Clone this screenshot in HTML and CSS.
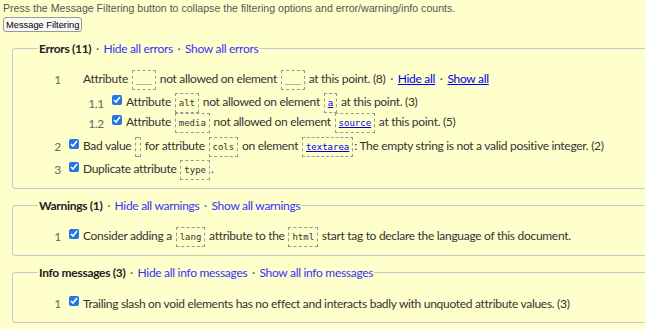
FILE: index.html
```html
<!doctype html>
<html lang="en">
  <head>
    <meta charset="UTF-8" />
    <title>Message Filtering</title>
    <link rel="stylesheet" href="styles.css">
  </head>
  <body>
    <p class="ayuda">Press the Message Filtering button to collapse the filtering options and error/warning/info counts.</p>
    <button class="filtro-btn">Message Filtering</button>

    <fieldset class="grupo">
      <legend>Errors (11) <span class="sep">·</span> <a href="#">Hide all errors</a> <span class="sep">·</span> <a href="#">Show all errors</a></legend>
      <div class="fila">
        <span class="num">1</span>
        <span class="casilla"></span>
        <span class="texto">Attribute <code>___</code> not allowed on element <code>___</code> at this point. (8) <span class="sep">·</span> <a class="sub" href="#">Hide all</a> <span class="sep">·</span> <a class="sub" href="#">Show all</a></span>
      </div>
      <div class="anidado">
        <div class="fila">
          <span class="num">1.1</span>
          <input type="checkbox" checked>
          <span class="texto">Attribute <code>alt</code> not allowed on element <code><a href="#">a</a></code> at this point. (3)</span>
        </div>
        <div class="fila">
          <span class="num">1.2</span>
          <input type="checkbox" checked>
          <span class="texto">Attribute <code>media</code> not allowed on element <code><a href="#">source</a></code> at this point. (5)</span>
        </div>
      </div>
      <div class="fila">
        <span class="num">2</span>
        <input type="checkbox" checked>
        <span class="texto">Bad value <code class="vacio"></code> for attribute <code>cols</code> on element <code><a href="#">textarea</a></code>: The empty string is not a valid positive integer. (2)</span>
      </div>
      <div class="fila">
        <span class="num">3</span>
        <input type="checkbox" checked>
        <span class="texto">Duplicate attribute <code>type</code>.</span>
      </div>
    </fieldset>

    <fieldset class="grupo">
      <legend>Warnings (1) <span class="sep">·</span> <a href="#">Hide all warnings</a> <span class="sep">·</span> <a href="#">Show all warnings</a></legend>
      <div class="fila">
        <span class="num">1</span>
        <input type="checkbox" checked>
        <span class="texto">Consider adding a <code>lang</code> attribute to the <code>html</code> start tag to declare the language of this document.</span>
      </div>
    </fieldset>

    <fieldset class="grupo">
      <legend>Info messages (3) <span class="sep">·</span> <a href="#">Hide all info messages</a> <span class="sep">·</span> <a href="#">Show all info messages</a></legend>
      <div class="fila">
        <span class="num">1</span>
        <input type="checkbox" checked>
        <span class="texto">Trailing slash on void elements has no effect and interacts badly with unquoted attribute values. (3)</span>
      </div>
    </fieldset>
  </body>
</html>
```

FILE: styles.css
```css
body {
  margin: 0;
  padding: 2px 3px;
  background-color: #ffffcc;
  font-family: "Lato", sans-serif;
  font-size: 12px;
  letter-spacing: -0.3px;
  color: #333;
  overflow: hidden;
  width: 760px;
}

.ayuda {
  margin: 0;
  font-family: "Liberation Sans", Arial, sans-serif;
  font-size: 10.6px;
  letter-spacing: 0;
  color: #555;
}

.filtro-btn {
  margin-top: 3px;
  font-family: "Liberation Sans", Arial, sans-serif;
  font-size: 9.3px;
  letter-spacing: 0;
  color: #000;
  background-color: #f8f8f8;
  border: 1px solid #999;
  border-radius: 3px;
  padding: 0 2px;
  height: 15px;
  line-height: 12px;
}

.grupo {
  margin: 9px 0 0 9px;
  padding: 12px 0 7px 0;
  border: 1px solid #c8c8c8;
  border-radius: 3px;
}

.grupo + .grupo {
  margin-top: 9px;
}

.grupo legend {
  margin-left: 25px;
  padding: 0 1px;
  font-weight: bold;
  color: #222;
}

legend a {
  font-weight: normal;
  color: #3333ff;
  text-decoration: none;
}

.sep {
  font-weight: normal;
  color: #555;
  padding: 0 2px;
}

.fila {
  display: flex;
  align-items: center;
  height: 23px;
}

.num {
  width: 48px;
  text-align: right;
  color: #666;
}

.casilla,
.fila input[type="checkbox"] {
  width: 10px;
  height: 10px;
  margin: 0 4px 0 8px;
  accent-color: #2575e8;
  align-self: flex-start;
  margin-top: 4px;
}

.anidado {
  margin: 2px 0;
}

.anidado .fila {
  padding-left: 43px;
  height: 20px;
}

.anidado .fila input[type="checkbox"] {
  margin-top: 2px;
}

.texto a.sub {
  color: #0000ee;
  text-decoration: underline;
}

code {
  display: inline-block;
  font-family: "DejaVu Sans Mono", monospace;
  font-size: 9px;
  letter-spacing: 0;
  color: #333;
  border: 1px dashed #999;
  padding: 1px 3px;
  line-height: 16px;
  vertical-align: middle;
  margin: 0 1px;
}

code.vacio {
  height: 16px;
  padding: 1px 2px;
}

code a {
  color: #0000ee;
}
```
